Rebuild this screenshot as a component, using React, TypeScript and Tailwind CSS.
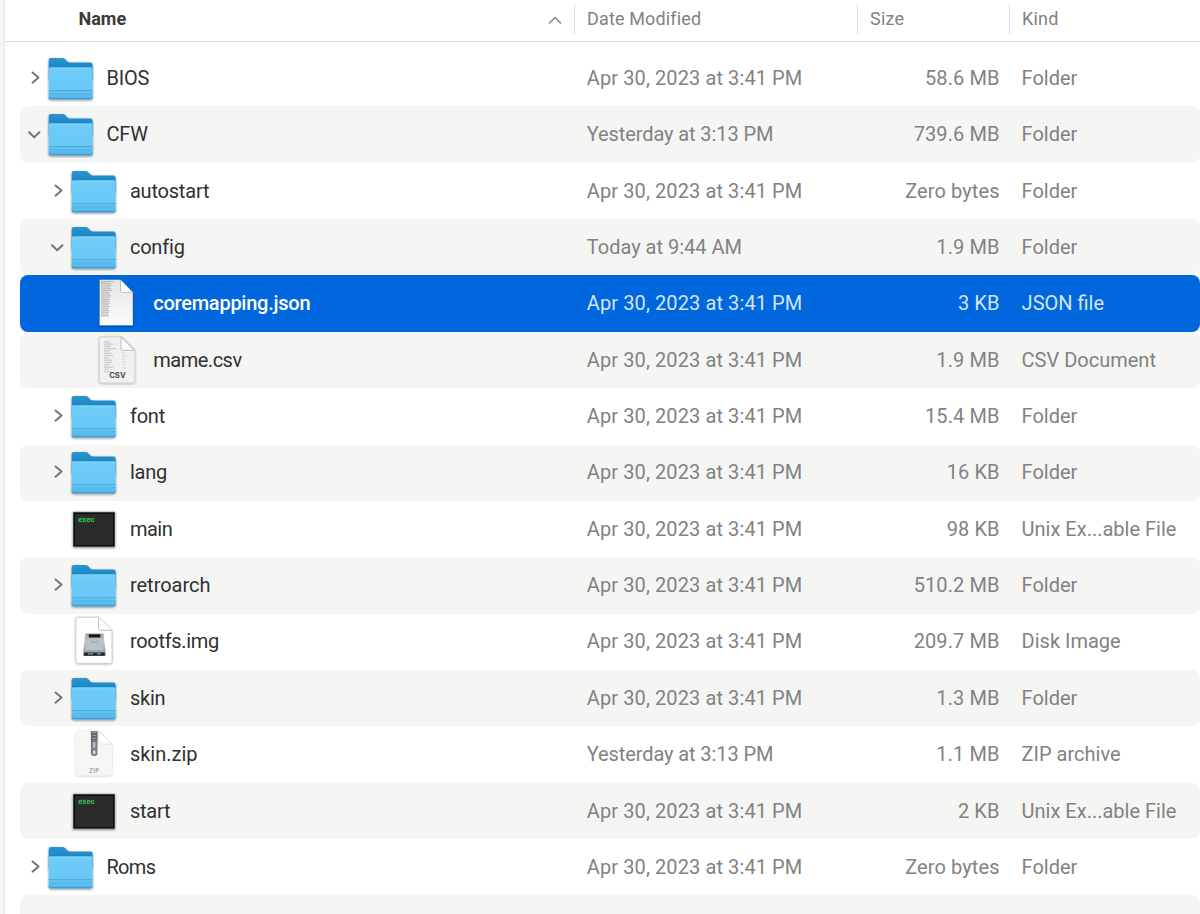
import { clsx } from 'clsx'

type IconKind = 'folder' | 'json' | 'csv' | 'exec' | 'disk' | 'zip'

interface FileRow {
  name: string
  level: 0 | 1 | 2
  icon: IconKind
  date: string
  size: string
  kind: string
  open?: boolean
  selected?: boolean
  tracking?: string
}

const APR = 'Apr 30, 2023 at 3:41 PM'

const rows: FileRow[] = [
  { name: 'BIOS', level: 0, icon: 'folder', date: APR, size: '58.6 MB', kind: 'Folder' },
  { name: 'CFW', level: 0, icon: 'folder', date: 'Yesterday at 3:13 PM', size: '739.6 MB', kind: 'Folder', open: true },
  { name: 'autostart', level: 1, icon: 'folder', date: APR, size: 'Zero bytes', kind: 'Folder' },
  { name: 'config', level: 1, icon: 'folder', date: 'Today at 9:44 AM', size: '1.9 MB', kind: 'Folder', open: true },
  { name: 'coremapping.json', level: 2, icon: 'json', date: APR, size: '3 KB', kind: 'JSON file', selected: true, tracking: 'tracking-[-0.25px]' },
  { name: 'mame.csv', level: 2, icon: 'csv', date: APR, size: '1.9 MB', kind: 'CSV Document', tracking: 'tracking-[-0.5px]' },
  { name: 'font', level: 1, icon: 'folder', date: APR, size: '15.4 MB', kind: 'Folder' },
  { name: 'lang', level: 1, icon: 'folder', date: APR, size: '16 KB', kind: 'Folder' },
  { name: 'main', level: 1, icon: 'exec', date: APR, size: '98 KB', kind: 'Unix Ex...able File', tracking: 'tracking-[-0.5px]' },
  { name: 'retroarch', level: 1, icon: 'folder', date: APR, size: '510.2 MB', kind: 'Folder', tracking: 'tracking-normal' },
  { name: 'rootfs.img', level: 1, icon: 'disk', date: APR, size: '209.7 MB', kind: 'Disk Image', tracking: 'tracking-[-0.3px]' },
  { name: 'skin', level: 1, icon: 'folder', date: APR, size: '1.3 MB', kind: 'Folder' },
  { name: 'skin.zip', level: 1, icon: 'zip', date: 'Yesterday at 3:13 PM', size: '1.1 MB', kind: 'ZIP archive', tracking: 'tracking-normal' },
  { name: 'start', level: 1, icon: 'exec', date: APR, size: '2 KB', kind: 'Unix Ex...able File' },
  { name: 'Roms', level: 0, icon: 'folder', date: APR, size: 'Zero bytes', kind: 'Folder', tracking: 'tracking-[-0.7px]' },
]

const indent = ['pl-[6.5px]', 'pl-[29.9px]', 'pl-[53.3px]']

function Defs() {
  return (
    <svg className="absolute size-0" aria-hidden>
      <defs>
        <linearGradient id="front" x1="0" y1="0" x2="0" y2="1">
          <stop offset="0" stopColor="#7dd2f8" />
          <stop offset="0.12" stopColor="#6ecbf7" />
          <stop offset="0.7" stopColor="#69c8f6" />
          <stop offset="1" stopColor="#52b4e8" />
        </linearGradient>
        <linearGradient id="back" x1="0" y1="0" x2="0" y2="1">
          <stop offset="0" stopColor="#2b95d0" />
          <stop offset="0.5" stopColor="#1a84c4" />
        </linearGradient>
        <linearGradient id="paper" x1="0" y1="0" x2="0" y2="1">
          <stop offset="0" stopColor="#e4e4e4" />
          <stop offset="1" stopColor="#fcfcfc" />
        </linearGradient>
        <linearGradient id="metal" x1="0" y1="0" x2="0" y2="1">
          <stop offset="0" stopColor="#9aa3a7" />
          <stop offset="0.35" stopColor="#c0c9cc" />
          <stop offset="1" stopColor="#8c9599" />
        </linearGradient>
        <filter id="shadow" x="-20%" y="-20%" width="140%" height="140%">
          <feDropShadow dx="0" dy="0.9" stdDeviation="1" floodColor="#000" floodOpacity="0.5" />
        </filter>
        <filter id="softShadow" x="-20%" y="-20%" width="140%" height="140%">
          <feDropShadow dx="0" dy="0.6" stdDeviation="0.9" floodColor="#000" floodOpacity="0.28" />
        </filter>
      </defs>
    </svg>
  )
}

function FolderIcon() {
  return (
    <g filter="url(#shadow)">
      <path d="M1.7 10.2q0-2.200 2.200-2.200h11.400q1.600 0 2.800 1.100l2.200 2.400q1.200 1.100 2.800 1.100h20.300q2.200 0 2.200 2.200V30H1.700z" fill="url(#back)" />
      <path d="M1.700 19q0-1.800 1.800-1.800h40.300q1.800 0 1.800 1.800v28.200q0 2-2 2H3.700q-2 0-2-2z" fill="url(#front)" />
      <path d="M1.700 40.600h43.900" stroke="#4aa9dc" strokeWidth="0.900" />
      <path d="M1.700 43.800h43.900" stroke="#4fafe2" strokeWidth="0.700" />
      <path d="M1.700 46.200v1q0 2 2 2h39.900q2 0 2-2v-1q0 1.700-2 1.700H3.700q-2 0-2-1.700z" fill="#3c9cd2" />
    </g>
  )
}

// repeated short strokes that read as lines of tiny text
function TinyText({ x, y, widths, color, step }: { x: number; y: number; widths: number[]; color: string; step: number }) {
  return (
    <>
      {widths.map((w, i) => (
        <rect key={i} x={x} y={y + i * step} width={w} height={step * 0.65} fill={color} />
      ))}
    </>
  )
}

function JsonIcon() {
  return (
    <g filter="url(#shadow)">
      <path d="M6.700 4.800h20.800l12.300 12.600V50.200H6.700z" fill="url(#paper)" />
      <TinyText x={8} y={6} step={1.8} color="#bcbcbc" widths={[13, 10, 11, 9, 10, 11, 8, 9, 10, 8, 9, 8, 9, 8, 9, 7, 8, 8, 7, 8]} />
      <path d="M27.500 4.800l12.300 12.600H29q-1.500 0-1.500-1.500z" fill="#fff" stroke="#a9a9a9" strokeWidth="0.700" />
    </g>
  )
}

function CsvIcon() {
  return (
    <g>
      <path d="M8 4.900h21l12.800 12.800v31.500q0 1.800-1.800 1.800H8q-1.800 0-1.800-1.800V6.700q0-1.800 1.800-1.800z" fill="#f1f1f0" stroke="#c8c8c8" strokeWidth="0.800" filter="url(#softShadow)" />
      <TinyText x={11} y={9} step={2.3} color="#d0d0d0" widths={[6, 9, 7, 12, 6, 8, 9, 5, 8, 8, 6, 9, 5, 7]} />
      <TinyText x={29} y={20} step={3} color="#e1e1e1" widths={[3, 5, 3, 4, 3, 5]} />
      <path d="M28 5v11.500q0 1.800 1.800 1.800H41.500z" fill="#fdfdfd" stroke="#b6b6b6" strokeWidth="0.900" />
      <text x="24.400" y="45.800" textAnchor="middle" fontSize="7" fontWeight="700" textLength="16.500" lengthAdjust="spacingAndGlyphs" fill="#4a4a4a" className="font-['Inter',sans-serif]">CSV</text>
    </g>
  )
}

function ExecIcon() {
  return (
    <g filter="url(#shadow)">
      <rect x="2.700" y="10.400" width="42.600" height="35.600" rx="0.800" fill="#a9b9bf" />
      <rect x="3.300" y="11.300" width="41.400" height="34.300" fill="#0c0c0c" />
      <rect x="4.900" y="12.800" width="38.200" height="31.200" fill="#2b2b2b" />
      <text x="8.200" y="20.600" fontSize="7" fontWeight="700" textLength="16.500" lengthAdjust="spacingAndGlyphs" fill="#36b94f" stroke="#36b94f" strokeWidth="0.300" className="font-['Liberation_Mono',monospace]">exec</text>
    </g>
  )
}

function DiskIcon() {
  return (
    <g>
      <path d="M7.700 4.200h21l13.300 13.100v31.300q0 1.800-1.800 1.800H7.700q-1.800 0-1.800-1.800V6q0-1.800 1.800-1.800z" fill="#fff" stroke="#c6c6c6" strokeWidth="0.900" filter="url(#softShadow)" />
      <path d="M28.500 4.400v11.100q0 1.800 1.800 1.800H42" fill="#fdfdfd" stroke="#c2c2c2" strokeWidth="1" />
      <path d="M15.400 20.600h18l2.200 17.600v4.600H13.200v-4.600z" fill="url(#metal)" />
      <path d="M18.800 21.300h11.600v3.200H18.800z" fill="#15181a" />
      <path d="M17 27h14.700l1.300 10H15.700z" fill="#b9c2c6" />
      <path d="M20.500 28q4 3 8 0" fill="none" stroke="#90999d" strokeWidth="0.900" />
      <path d="M14 39.500h20.800v3.300H14z" fill="#23282a" />
      <path d="M18 40.900h5M27 40.900h4" stroke="#8f999d" strokeWidth="1.300" />
    </g>
  )
}

function ZipIcon() {
  return (
    <g>
      <path d="M7.700 5.200h21.300l12.700 12.800v29.400q0 1.800-1.800 1.800H7.700q-1.800 0-1.800-1.800V7q0-1.800 1.800-1.800z" fill="#f6f6f5" filter="url(#softShadow)" />
      <path d="M28.700 5.200l13 12.800H30.500q-1.800 0-1.800-1.800z" fill="#fff" stroke="#d6d6d6" strokeWidth="0.700" />
      <path d="M20.900 5.200h6.600v11h-6.600z" fill="#63676d" />
      <path d="M22.700 6.500h3M22.700 9.500h3M22.700 12.500h3" stroke="#a3a9b0" strokeWidth="1.200" />
      <rect x="20.900" y="14" width="6.600" height="16" rx="3" fill="#777b81" />
      <rect x="22.900" y="16" width="2.600" height="6" rx="1" fill="#b8bdc3" />
      <rect x="22.900" y="24.300" width="2.600" height="4" rx="1.200" fill="#d5d9dd" />
      <text x="24.200" y="46.800" textAnchor="middle" fontSize="6" fontWeight="500" letterSpacing="0.400" fill="#8d8d8d" className="font-['Inter',sans-serif]">ZIP</text>
    </g>
  )
}

const icons: Record<IconKind, () => React.ReactElement> = {
  folder: FolderIcon,
  json: JsonIcon,
  csv: CsvIcon,
  exec: ExecIcon,
  disk: DiskIcon,
  zip: ZipIcon,
}

function Disclosure({ open }: { open?: boolean }) {
  return (
    <svg viewBox="0 0 20 56" className="h-14 w-5 shrink-0" fill="none" stroke="#757575" strokeWidth="2" strokeLinecap="round" strokeLinejoin="round">
      {open ? <path d="M2 26.200l5.200 5.100 5.200-5.100" /> : <path d="M5.500 22.500l6 5.100-6 5.100" />}
    </svg>
  )
}

function Row({ row, index }: { row: FileRow; index: number }) {
  const Icon = icons[row.icon]
  return (
    <div
      className={clsx(
        'flex h-[56.36px] items-center rounded-lg pb-[0.6px] text-xl',
        row.selected ? 'bg-[#0067de] text-[#d3e4fa]' : 'text-[#828282]',
        !row.selected && index % 2 === 1 && 'bg-[#f5f5f4]',
      )}
    >
      <div className={clsx('flex w-[566.800px] items-center', indent[row.level])}>
        {row.icon === 'folder' ? <Disclosure open={row.open} /> : <span className="w-5" />}
        <svg viewBox="0 0 48 56" className="h-14 w-12 shrink-0">
          <Icon />
        </svg>
        <span className={clsx('pl-3', row.tracking ?? 'tracking-[-0.2px]', row.selected ? 'font-medium text-white' : 'text-[#303030]')}>
          {row.name}
        </span>
      </div>
      <span className={clsx('w-[272px]', row.date === APR ? 'tracking-[0.1px]' : row.date.startsWith('Y') && 'tracking-[-0.1px]')}>{row.date}</span>
      <span className="w-[140.800px] text-right tracking-[0.100px]">{row.size}</span>
      <span className="pl-[22px]">{row.kind}</span>
    </div>
  )
}

export default function App() {
  return (
    <div className="flex h-[914px] w-[1200px] overflow-hidden bg-white font-['Roboto',sans-serif] whitespace-nowrap">
      <Defs />
      <div className="w-[5px] shrink-0 border-r border-[#e6e6e5] bg-[#f5f5f4]" />
      <div className="flex w-[1195px] flex-col">
        <header className="flex h-[42px] shrink-0 items-start border-b border-[#dadada] pt-[5px] text-lg leading-7 text-[#828282]">
          <div className="flex h-[29px] w-[570px] items-center justify-between border-r border-[#dcdcdc] pr-[12px] pl-[73.500px]">
            <span className="pb-px font-bold text-[#3a3a3a]">Name</span>
            <svg viewBox="0 0 14 10" className="h-2.5 w-3.5" fill="none" stroke="#858585" strokeWidth="1.500" strokeLinecap="round" strokeLinejoin="round">
              <path d="M1.500 8L7 2.500 12.500 8" />
            </svg>
          </div>
          <div className="h-[29px] w-[283px] border-r border-[#dcdcdc] pl-[12px] tracking-[0.150px]">Date Modified</div>
          <div className="h-[29px] w-[152px] border-r border-[#dcdcdc] pl-[12px] tracking-[0.200px]">Size</div>
          <div className="pl-[12px] tracking-[0.200px]">Kind</div>
        </header>
        <main className="pt-2 pl-[15px]">
          {rows.map((row, i) => (
            <Row key={row.name} row={row} index={i} />
          ))}
          <div className="h-[56.36px] rounded-lg bg-[#f5f5f4]" />
        </main>
      </div>
    </div>
  )
}
